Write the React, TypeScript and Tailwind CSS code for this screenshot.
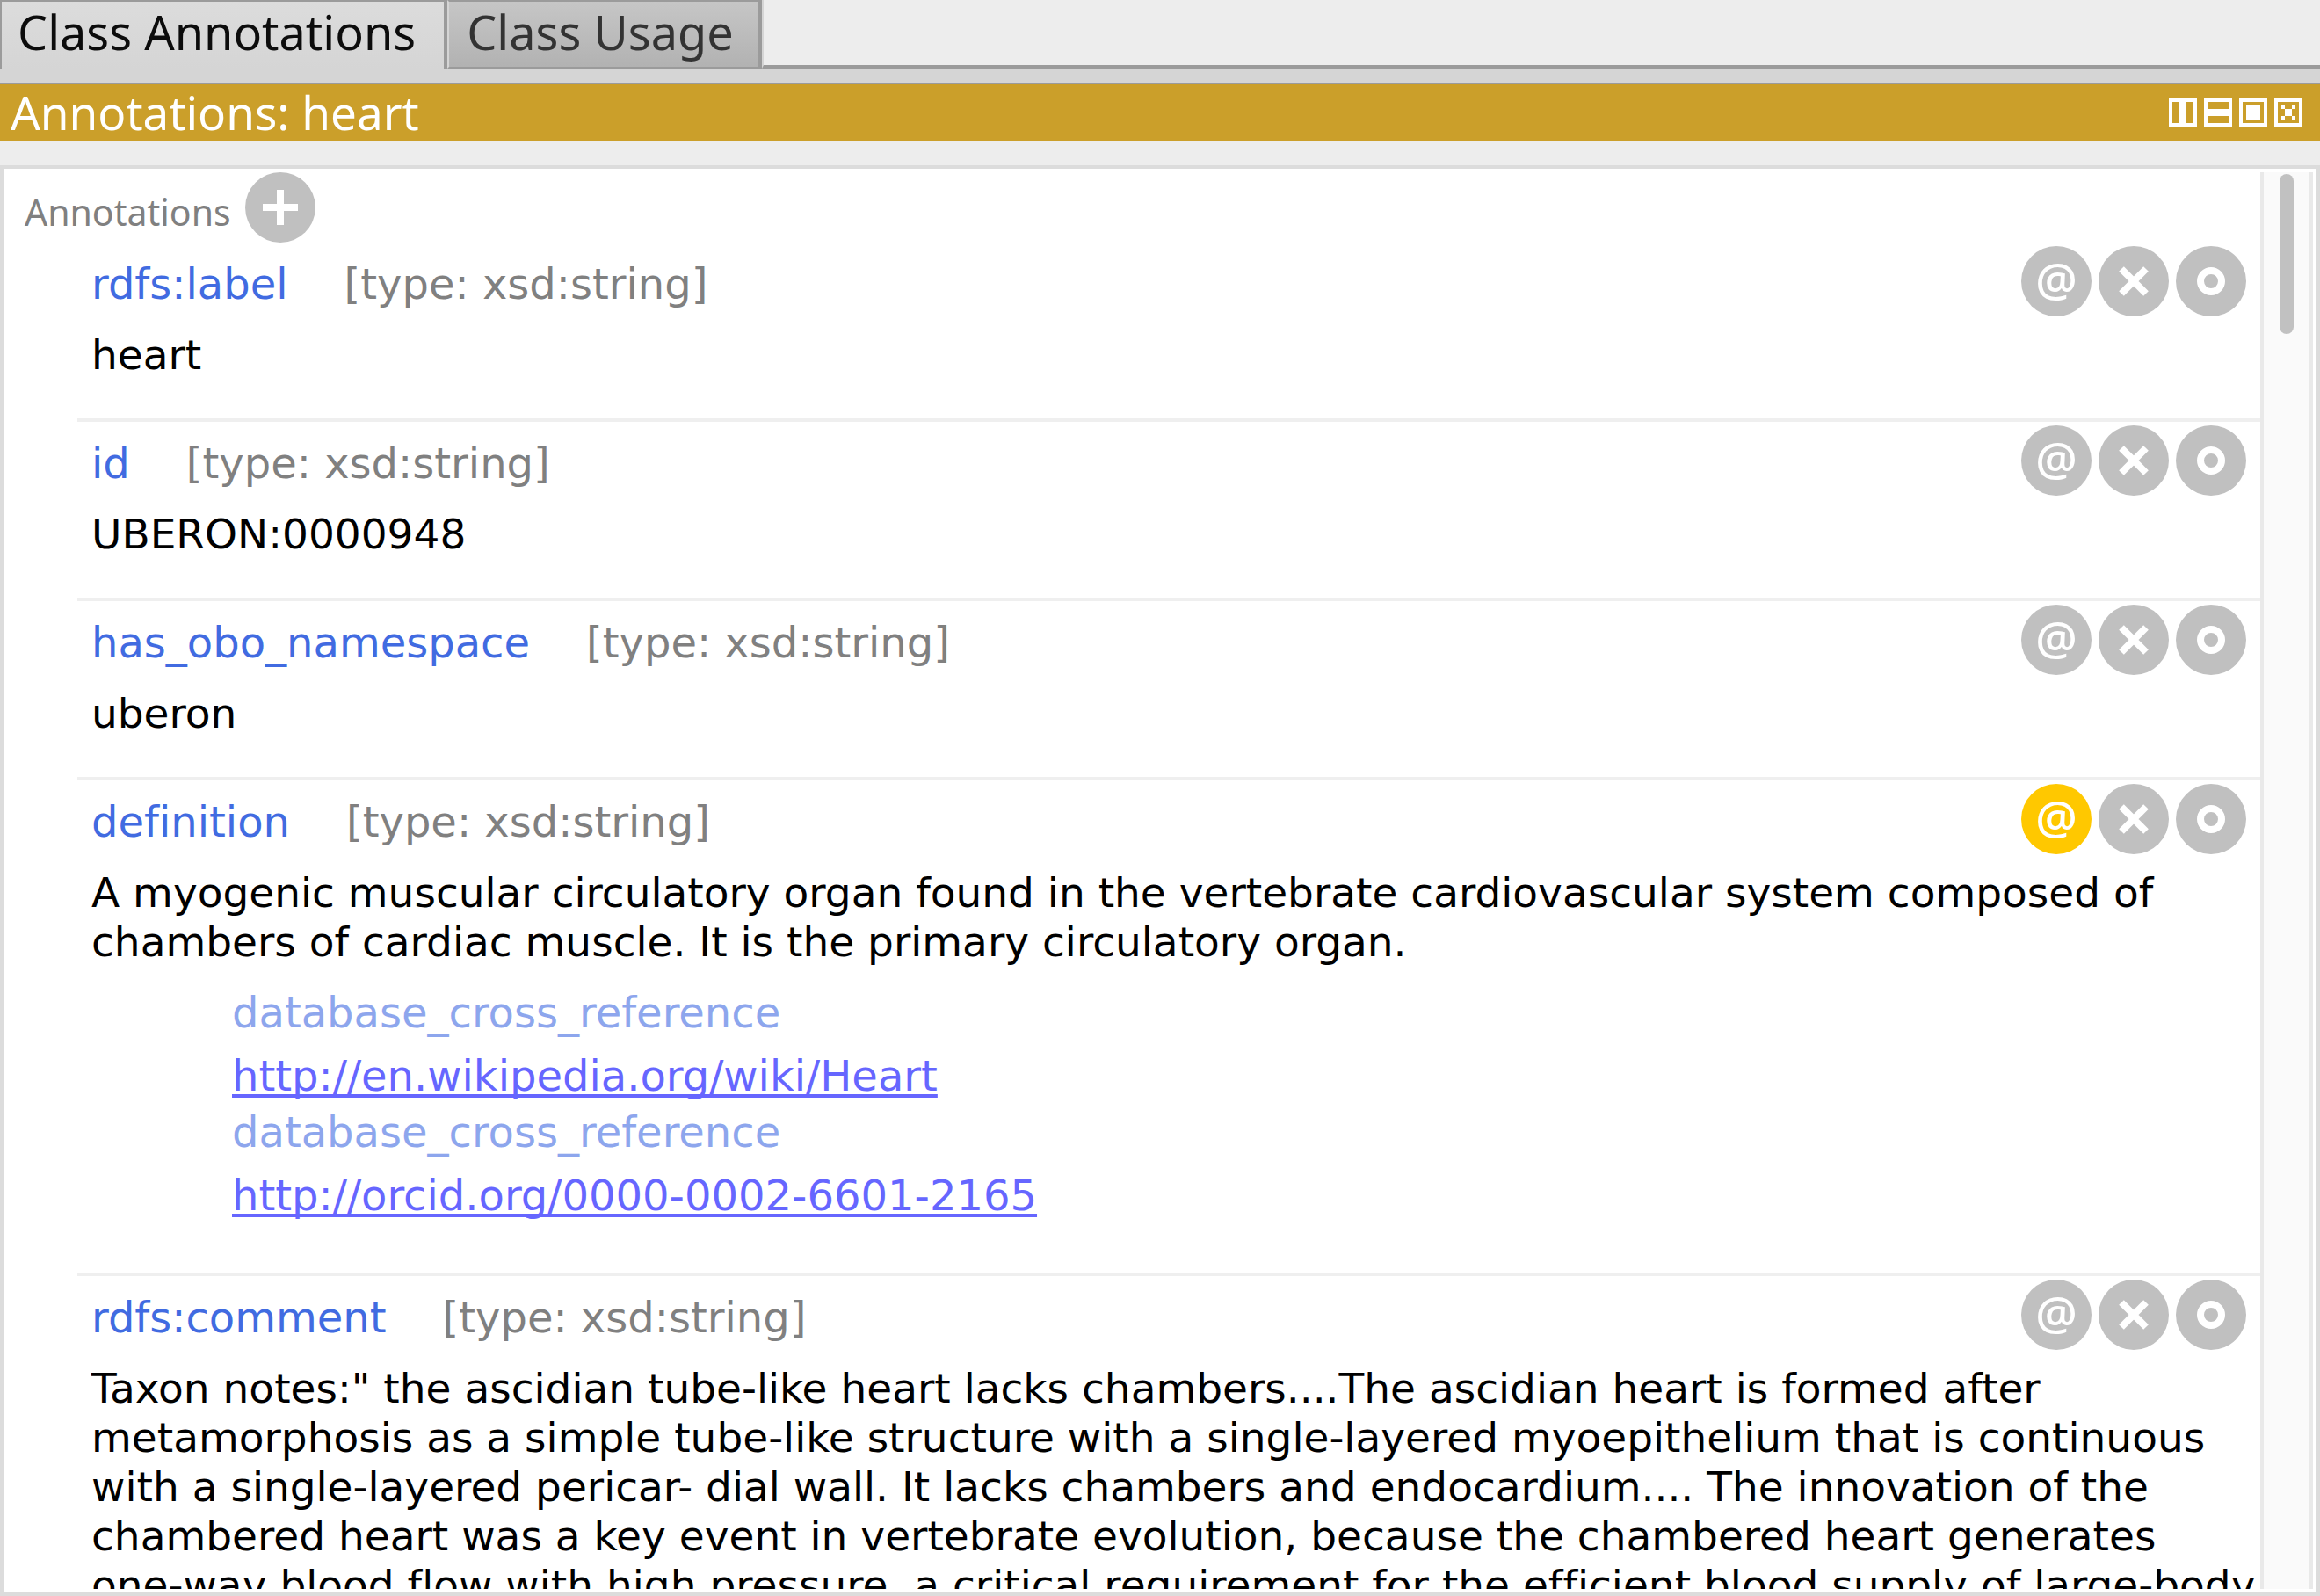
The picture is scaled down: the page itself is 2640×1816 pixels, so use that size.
import React from "react";

type Annotation = {
  property: string;
  lines: string[];
  highlighted?: boolean;
  references?: string[];
};

const annotations: Annotation[] = [
  { property: "rdfs:label", lines: ["heart"] },
  { property: "id", lines: ["UBERON:0000948"] },
  { property: "has_obo_namespace", lines: ["uberon"] },
  {
    property: "definition",
    highlighted: true,
    lines: [
      "A myogenic muscular circulatory organ found in the vertebrate cardiovascular system composed of",
      "chambers of cardiac muscle. It is the primary circulatory organ.",
    ],
    references: ["http://en.wikipedia.org/wiki/Heart", "http://orcid.org/0000-0002-6601-2165"],
  },
  {
    property: "rdfs:comment",
    lines: [
      'Taxon notes:" the ascidian tube-like heart lacks chambers....The ascidian heart is formed after',
      "metamorphosis as a simple tube-like structure with a single-layered myoepithelium that is continuous",
      "with a single-layered pericar- dial wall. It lacks chambers and endocardium.... The innovation of the",
      "chambered heart was a key event in vertebrate evolution, because the chambered heart generates",
      "one-way blood flow with high pressure, a critical requirement for the efficient blood supply of large-body",
    ],
  },
];

const windowControls = [
  { label: "Split vertically", d: "M12 4h8v24h-8z" },
  { label: "Split horizontally", d: "M4 12h24v8H4z" },
  { label: "Float", d: "M8 8h16v16H8z" },
  { label: "Close", d: "M12 12h8v8h-8zM8 8h4v4H8zM20 8h4v4h-4zM8 20h4v4H8zM20 20h4v4h-4z" },
];

function RoundButton({
  label,
  active,
  children,
}: {
  label: string;
  active?: boolean;
  children: React.ReactNode;
}) {
  return (
    <button
      type="button"
      aria-label={label}
      className={
        "flex size-20 shrink-0 items-center justify-center rounded-full text-white " +
        (active ? "bg-[#ffc800]" : "bg-[#c0c0c0]")
      }
    >
      {children}
    </button>
  );
}

function Glyph({ children }: { children: React.ReactNode }) {
  return (
    <svg viewBox="0 0 80 80" className="size-20" fill="none" stroke="currentColor" strokeWidth="8" aria-hidden="true">
      {children}
    </svg>
  );
}

function AnnotationRow({ property, lines, highlighted, references }: Annotation) {
  return (
    <li className="ml-[84px] border-b-4 border-[#efefef] pt-1">
      <div className="flex items-center px-4">
        <span className="pt-1.5 text-[#416be1]">{property}</span>
        <span className="ml-16 pt-1.5 text-[#808080]">[type: xsd:string]</span>
        <div className="ml-auto flex gap-2">
          <RoundButton label={`Annotate ${property}`} active={highlighted}>
            <span className="pb-1 font-['Open_Sans',sans-serif] text-[53px] leading-[56px] font-semibold">@</span>
          </RoundButton>
          <RoundButton label={`Delete ${property}`}>
            <Glyph>
              <path d="M26 26L54 54M54 26L26 54" />
            </Glyph>
          </RoundButton>
          <RoundButton label={`Edit ${property}`}>
            <Glyph>
              <circle cx="40" cy="40" r="12" />
            </Glyph>
          </RoundButton>
        </div>
      </div>
      <div className="pt-4 pb-11 pl-4 whitespace-nowrap">
        <div className="text-[47px] text-black">
          {lines.map((line) => (
            <p key={line}>{line}</p>
          ))}
        </div>
        {references && (
          <dl className="mt-6 mb-4 ml-40 flex flex-col gap-2">
            {references.map((url) => (
              <div key={url} className="flex flex-col items-start gap-4">
                <dt className="text-[#8da6ed]">database_cross_reference</dt>
                <dd>
                  <a
                    href={url}
                    className="text-[#6666ff] underline decoration-4 underline-offset-4 [text-decoration-skip-ink:none]"
                  >
                    {url}
                  </a>
                </dd>
              </div>
            ))}
          </dl>
        )}
      </div>
    </li>
  );
}

export default function App() {
  return (
    <main className="flex h-screen flex-col bg-[#ededed] font-['DejaVu_Sans',sans-serif] text-[48px] leading-[56px] [font-variant-ligatures:none]">
      <div role="tablist" className="flex font-['Noto_Sans',sans-serif] text-[54px] leading-[68px]">
        <button
          type="button"
          role="tab"
          aria-selected="true"
          className="border-t-2 border-r-4 border-l-2 border-[#9b9b9b] bg-linear-to-b from-[#dcdcdc] to-[#d5d5d5] pr-8 pb-2 pl-[18px] text-[#0c0c0c]"
        >
          Class Annotations
        </button>
        <button
          type="button"
          role="tab"
          aria-selected="false"
          className="border-t-2 border-r-4 border-b-2 border-l-2 border-[#9b9b9b] border-l-[#d5d5d5] bg-linear-to-b from-[#c6c6c6] to-[#b2b2b2] pr-7 pb-1.5 pl-5 text-[#333333]"
        >
          Class Usage
        </button>
        <div className="flex-1 border-b-4 border-l-2 border-[#9b9b9b] border-l-[#d5d5d5]" />
      </div>
      <div className="h-[18px] shrink-0 border-b-2 border-[#9b9b9b] bg-[#d5d5d5]" />

      <header className="flex h-16 shrink-0 items-center bg-[#cb9f2a] pr-5 pl-3 text-white">
        <h1 className="font-['Noto_Sans',sans-serif] text-[53px] leading-[64px]">Annotations: heart</h1>
        <div className="ml-auto flex gap-2">
          {windowControls.map(({ label, d }) => (
            <button key={label} type="button" aria-label={label}>
              <svg viewBox="0 0 32 32" className="size-8" shapeRendering="crispEdges" aria-hidden="true">
                <path d="M2 2h28v28H2z" fill="none" stroke="currentColor" strokeWidth="4" />
                <path d={d} fill="currentColor" />
              </svg>
            </button>
          ))}
        </div>
      </header>

      <section className="mt-7 flex min-h-0 flex-1 border-4 border-[#dcdcdc] bg-white py-1 pr-1">
        <div className="min-w-0 flex-1 overflow-hidden">
          <div className="flex items-center gap-4 pl-6">
            <h2 className="pt-2.5 font-['Noto_Sans',sans-serif] text-[41px] text-[#808080]">Annotations</h2>
            <RoundButton label="Add annotation">
              <Glyph>
                <path d="M40 20V60M20 40H60" />
              </Glyph>
            </RoundButton>
          </div>
          <ul>
            {annotations.map((a) => (
              <AnnotationRow key={a.property} {...a} />
            ))}
          </ul>
        </div>
        <div className="flex w-[60px] shrink-0 justify-center border-x-4 border-x-[#e9e9e9] bg-[#fafafa] pt-0.5">
          <div className="h-[182px] w-4 rounded-full bg-[#c1c1c1]" />
        </div>
      </section>
    </main>
  );
}
